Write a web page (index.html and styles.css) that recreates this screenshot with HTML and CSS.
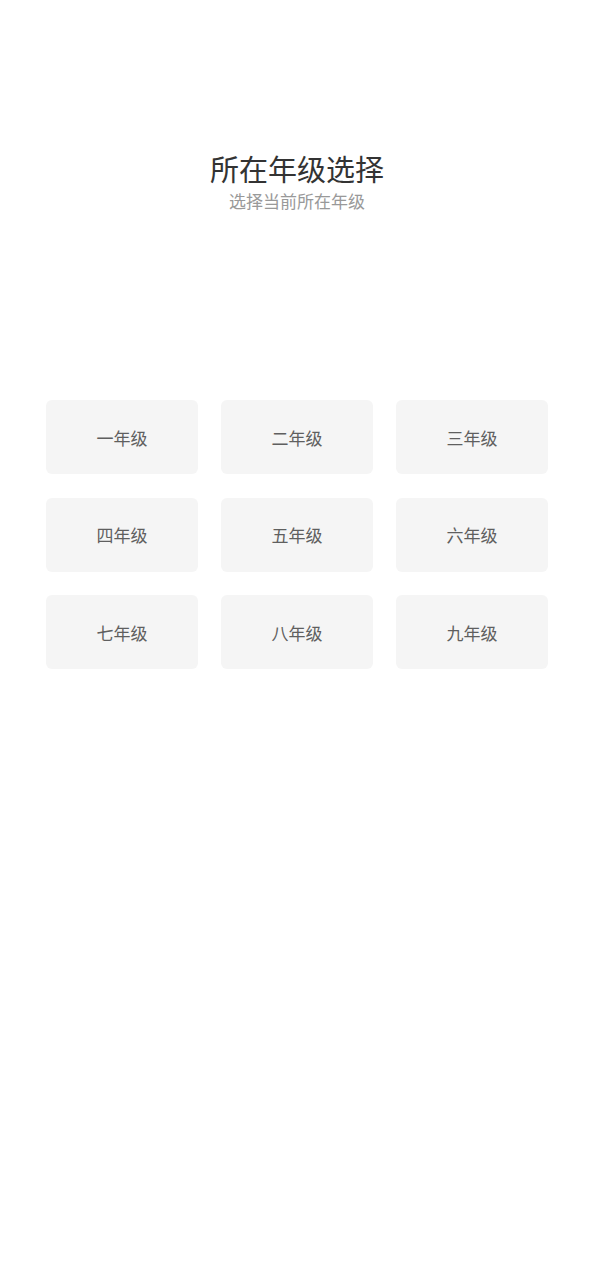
FILE: index.html
```html
<!DOCTYPE html>
<html lang="zh">
<head>
<meta charset="utf-8">
<link rel="stylesheet" href="styles.css">
</head>
<body>
<div class="page">
  <div class="header">
    <div class="title">所在年级选择</div>
    <div class="subtitle">选择当前所在年级</div>
  </div>
  <div class="grid">
    <div class="card">一年级</div>
    <div class="card">二年级</div>
    <div class="card">三年级</div>
    <div class="card">四年级</div>
    <div class="card">五年级</div>
    <div class="card">六年级</div>
    <div class="card">七年级</div>
    <div class="card">八年级</div>
    <div class="card">九年级</div>
  </div>
</div>
</body>
</html>
```
FILE: styles.css
```css
html, body {
  margin: 0;
  padding: 0;
  background: #ffffff;
}
body {
  font-family: "Noto Sans CJK SC", "Noto Sans", sans-serif;
}
.page {
  width: 594px;
  height: 1280px;
}
.header {
  padding-top: 148px;
  text-align: center;
}
.title {
  font-size: 29px;
  line-height: 40px;
  color: #333333;
}
.subtitle {
  font-size: 17px;
  line-height: 26px;
  color: #999999;
}
.grid {
  margin: 186px 46px 0 46px;
  display: grid;
  grid-template-columns: repeat(3, 152px);
  column-gap: 23px;
  row-gap: 23.5px;
}
.card {
  height: 74px;
  background: #f5f5f5;
  border-radius: 6px;
  display: flex;
  align-items: center;
  justify-content: center;
  font-size: 17px;
  color: #5f5f5f;
}
```
